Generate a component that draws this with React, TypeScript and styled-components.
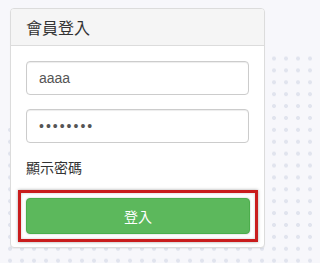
import React from "react";
import styled, { createGlobalStyle } from "styled-components";

const Global = createGlobalStyle`
  html, body {
    margin: 0;
    padding: 0;
  }
  body {
    min-height: 263px;
    font-family: "Liberation Sans", "Noto Sans CJK TC", sans-serif;
    background:
      linear-gradient(#f7f7fb, #f7f7fb) 0 0 / 100% 53px no-repeat,
      linear-gradient(#f7f7fb, #f7f7fb) 0 0 / 12px 128px no-repeat,
      radial-gradient(circle at center, #e1e4ee 0, #e1e4ee 1.7px, transparent 2.3px) 4px 5px / 12px 11.9px,
      #f7f7fb;
  }
`;

const Page = styled.div`
  padding: 8px 0 15px 10px;
`;

const Panel = styled.div`
  width: 253px;
  background: #fff;
  border: 1px solid #dcdcdc;
  border-radius: 4px;
  box-shadow: 0 1px 1px rgba(0, 0, 0, 0.05);
`;

const Heading = styled.div`
  height: 36px;
  display: flex;
  align-items: center;
  padding: 0 15px;
  background: #f5f5f5;
  border-bottom: 1px solid #dcdcdc;
  border-radius: 3px 3px 0 0;
  font-family: "Noto Sans CJK TC", sans-serif;
  font-size: 16px;
  color: #333;
`;

const Body = styled.div`
  padding: 15px 15px 13px;
  display: flex;
  flex-direction: column;
`;

const Field = styled.input<{ $gap?: number; $spaced?: boolean }>`
  box-sizing: border-box;
  width: 100%;
  height: 34px;
  padding: 6px 12px;
  border: 1px solid #cccccc;
  border-radius: 4px;
  box-shadow: inset 0 1px 1px rgba(0, 0, 0, 0.075);
  font-family: "Liberation Sans", "Noto Sans CJK TC", sans-serif;
  font-size: 14px;
  color: #555;
  background: #fff;
  outline: none;
  margin-bottom: ${(p) => p.$gap ?? 0}px;
  letter-spacing: ${(p) => (p.$spaced ? "2px" : "0")};
`;

const Label = styled.div`
  margin-top: 14px;
  line-height: 20px;
  font-family: "Noto Sans CJK TC", sans-serif;
  font-size: 14px;
  color: #333;
`;

const Highlight = styled.div`
  position: relative;
  margin: 13px -9px -8px -8px;
  padding: 5px;
  border: 3px solid #c91c1c;
  box-shadow: 0 0 3px rgba(0, 0, 0, 0.35), inset 0 0 3px rgba(0, 0, 0, 0.2);
`;

const Button = styled.button`
  display: flex;
  align-items: center;
  justify-content: center;
  width: 100%;
  height: 36px;
  border: 1px solid #4cae4c;
  border-radius: 4px;
  background: #5cb85c;
  color: #fff;
  font-family: "Noto Sans CJK TC", sans-serif;
  font-size: 14px;
  cursor: pointer;
  box-shadow: 0 0 2px rgba(0, 0, 0, 0.25);
`;

export default function App() {
  return (
    <>
      <Global />
      <Page>
        <Panel>
          <Heading>會員登入</Heading>
          <Body>
            <Field type="text" defaultValue="aaaa" $gap={14} />
            <Field type="password" defaultValue="aaaaaaaa" $spaced />
            <Label>顯示密碼</Label>
            <Highlight>
              <Button type="button">登入</Button>
            </Highlight>
          </Body>
        </Panel>
      </Page>
    </>
  );
}
